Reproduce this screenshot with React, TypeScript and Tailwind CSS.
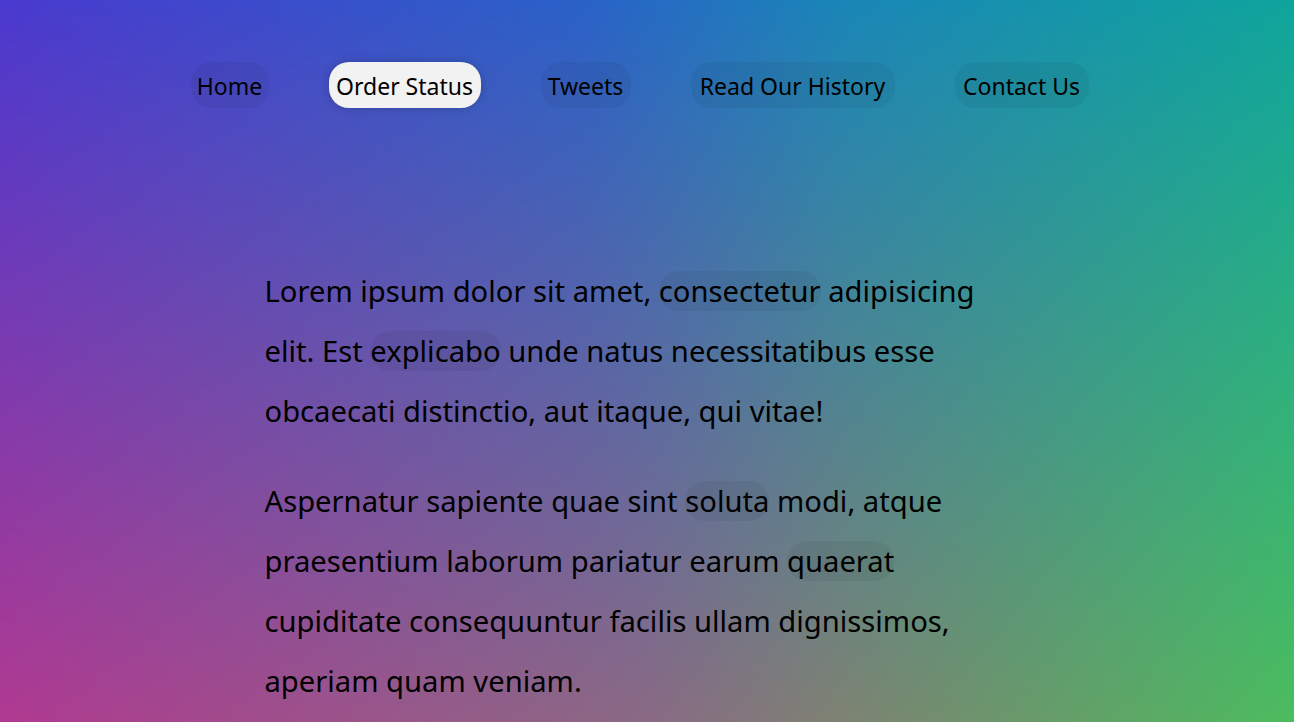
import React from "react";

const navItems = [
  { label: "Home", w: "w-[78px]", active: false },
  { label: "Order Status", w: "w-[152px]", active: true },
  { label: "Tweets", w: "w-[90px]", active: false },
  { label: "Read Our History", w: "w-[204px]", active: false },
  { label: "Contact Us", w: "w-[134px]", active: false },
];

function InlineLink({ children }: { children: React.ReactNode }) {
  return (
    <a href="#" className="rounded-[20px] bg-black/5 text-black no-underline">
      {children}
    </a>
  );
}

export default function App() {
  return (
    <div className="relative min-h-screen w-full overflow-hidden bg-[linear-gradient(to_right,#4a3acf_0%,#2a62c8_45%,#1a86b8_65%,#10a59d_100%)] font-['Noto_Sans',sans-serif] text-black">
      <div className="pointer-events-none absolute inset-0 bg-[linear-gradient(to_right,#b03a90_0%,#8a6a84_50%,#7e8272_65%,#4cbc5e_100%)] [mask-image:linear-gradient(to_bottom,transparent_0%,black_100%)]" />
      <div className="relative flex w-[1279px] flex-col">
        <nav className="flex justify-center gap-[60px] pt-[62px]">
          {navItems.map((item) => (
            <a
              key={item.label}
              href="#"
              className={`flex h-[46px] items-center justify-center rounded-[20px] pt-[3px] text-[23px] text-black no-underline ${item.w} ${
                item.active
                  ? "bg-[#f2f2f2] shadow-[0_0_10px_rgba(0,0,0,0.2)]"
                  : "bg-black/5"
              }`}
            >
              {item.label}
            </a>
          ))}
        </nav>
        <main className="mx-auto mt-[153px] w-[750px] text-[29.2px] leading-[60px]">
          <p>
            Lorem ipsum dolor sit amet, <InlineLink>consectetur</InlineLink>{" "}
            adipisicing elit. Est <InlineLink>explicabo</InlineLink> unde natus
            necessitatibus esse obcaecati distinctio, aut itaque, qui vitae!
          </p>
          <p className="mt-[30px]">
            Aspernatur sapiente quae sint <InlineLink>soluta</InlineLink> modi,
            atque praesentium laborum pariatur earum{" "}
            <InlineLink>quaerat</InlineLink> cupiditate consequuntur facilis
            ullam dignissimos, aperiam quam veniam.
          </p>
        </main>
      </div>
    </div>
  );
}
